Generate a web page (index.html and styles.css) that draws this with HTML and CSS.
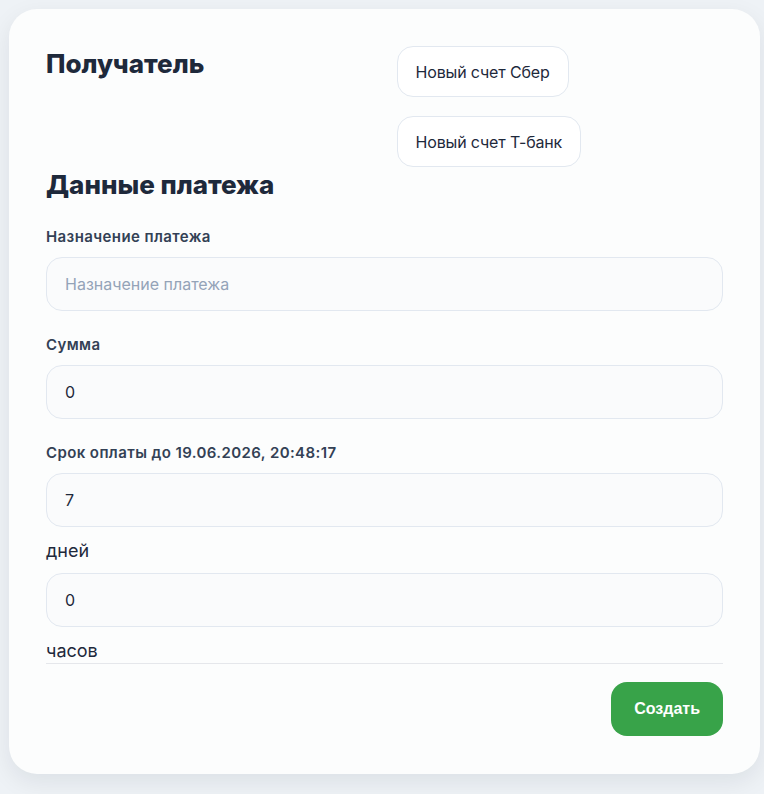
FILE: index.html
```html
<!DOCTYPE html>
<html lang="ru">
<head>
<meta charset="utf-8">
<title>Счет</title>
<link rel="stylesheet" href="styles.css">
</head>
<body>
<div class="card">
  <div class="top">
    <h2 class="title title-recipient">Получатель</h2>
    <div class="banks">
      <button class="bank-btn">Новый счет Сбер</button>
      <button class="bank-btn">Новый счет Т-банк</button>
    </div>
  </div>
  <h2 class="title title-pay">Данные платежа</h2>
  <div class="field">
    <label class="label">Назначение платежа</label>
    <input class="input" type="text" placeholder="Назначение платежа">
  </div>
  <div class="field">
    <label class="label">Сумма</label>
    <input class="input" type="text" value="0">
  </div>
  <div class="field field-last">
    <label class="label">Срок оплаты до 19.06.2026, 20:48:17</label>
    <input class="input" type="text" value="7">
    <span class="unit">дней</span>
    <input class="input" type="text" value="0">
    <span class="unit unit-last">часов</span>
  </div>
  <div class="footer">
    <button class="submit">Создать</button>
  </div>
</div>
</body>
</html>
```

FILE: styles.css
```css
html, body {
  margin: 0;
  padding: 0;
}
body {
  background: #eef2f6;
  padding: 9px 4px 22px 9px;
  font-family: "Inter", "Noto Sans", sans-serif;
  color: #1e293b;
}
.card {
  background: #fcfdfd;
  border-radius: 28px;
  padding: 37px 37px 38px;
  box-shadow: 0 8px 24px rgba(15, 23, 42, 0.08);
}
.top {
  display: grid;
  grid-template-columns: 1fr 1fr;
  column-gap: 24px;
}
.title {
  margin: 0;
  font-size: 26px;
  font-weight: 800;
  letter-spacing: 0;
  color: #1e293b;
  line-height: 32px;
}
.title-recipient {
  padding-top: 2px;
}
.title-pay {
  margin-top: 2px;
  margin-bottom: 26px;
}
.banks {
  display: flex;
  flex-direction: column;
  align-items: flex-start;
  gap: 19px;
}
.bank-btn {
  height: 51px;
  padding: 0 18px;
  border: 1px solid #e2e8f0;
  border-radius: 16px;
  background: #ffffff;
  font-family: "Inter", sans-serif;
  font-size: 16px;
  letter-spacing: -0.15px;
  color: #1e293b;
}
.field {
  display: flex;
  flex-direction: column;
  margin-bottom: 24px;
}
.label {
  font-size: 15px;
  font-weight: 600;
  letter-spacing: 0.4px;
  line-height: 20px;
  color: #334155;
  margin-bottom: 10px;
}
.input {
  box-sizing: border-box;
  height: 54px;
  width: 100%;
  padding: 0 18px;
  border: 1px solid #e2e8f0;
  border-radius: 16px;
  background: #fafbfc;
  font-family: "Inter", sans-serif;
  font-size: 16px;
  color: #1e293b;
  outline: none;
}
.input::placeholder {
  color: #94a3b8;
}
.unit {
  font-size: 18px;
  line-height: 24px;
  color: #1e293b;
  padding: 12px 0 10px;
}
.field-last {
  margin-bottom: 0;
}
.unit-last {
  padding-bottom: 0;
}
.footer {
  border-top: 1px solid #e5e7eb;
  padding-top: 18px;
  display: flex;
  justify-content: flex-end;
}
.submit {
  height: 54px;
  padding: 0 23px;
  border: none;
  border-radius: 16px;
  background: #38a349;
  color: #ffffff;
  font-family: "Liberation Sans", Arial, sans-serif;
  font-weight: 700;
  font-size: 16px;
}
```
